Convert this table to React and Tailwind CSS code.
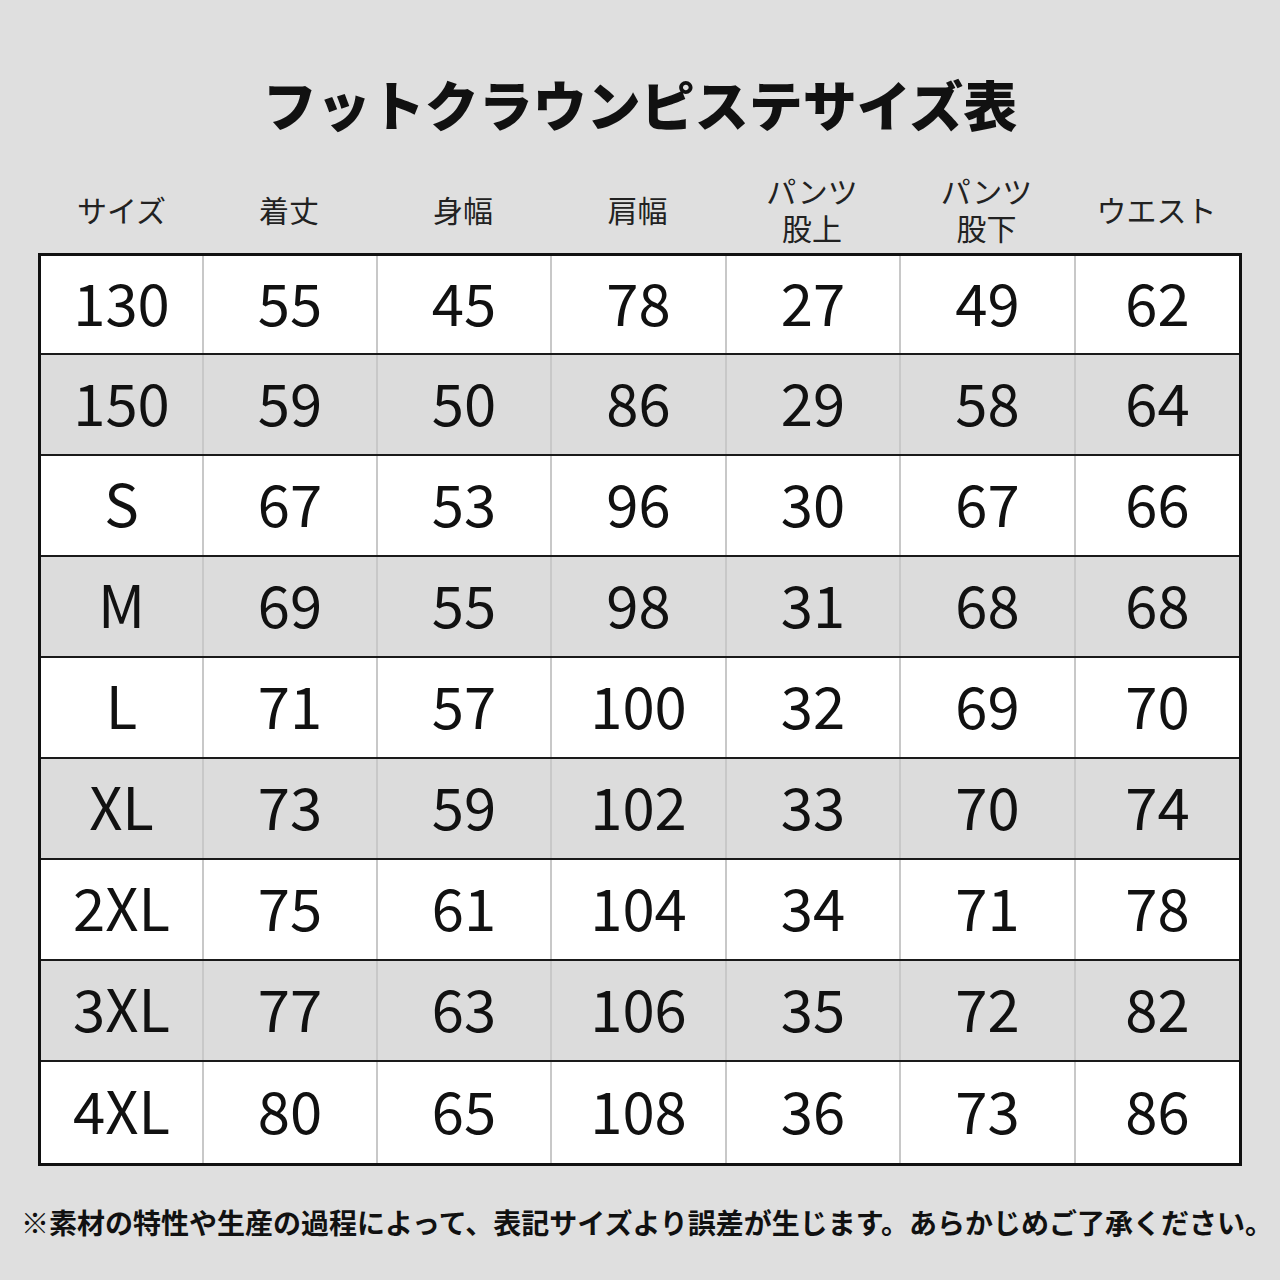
const columns = [
  { label: ["サイズ"] },
  { label: ["着丈"] },
  { label: ["身幅"] },
  { label: ["肩幅"] },
  { label: ["パンツ", "股上"] },
  { label: ["パンツ", "股下"] },
  { label: ["ウエスト"] },
];

const rows = [
  ["130", "55", "45", "78", "27", "49", "62"],
  ["150", "59", "50", "86", "29", "58", "64"],
  ["S", "67", "53", "96", "30", "67", "66"],
  ["M", "69", "55", "98", "31", "68", "68"],
  ["L", "71", "57", "100", "32", "69", "70"],
  ["XL", "73", "59", "102", "33", "70", "74"],
  ["2XL", "75", "61", "104", "34", "71", "78"],
  ["3XL", "77", "63", "106", "35", "72", "82"],
  ["4XL", "80", "65", "108", "36", "73", "86"],
];

const gridCols = "grid grid-cols-[161px_174px_174px_175px_174px_175px_165px]";

export default function App() {
  return (
    <div
      className="w-[1280px] h-[1280px] bg-[#dfdfdf] text-[#111] flex flex-col"
      style={{ fontFamily: '"Noto Sans CJK JP", "Noto Sans", sans-serif' }}
    >
      {/* Title */}
      <div className="h-[145px] pt-[70px] flex justify-center">
        <h1 className="text-[54px] leading-[70px] font-black -mt-[1px]">
          フットクラウンピステサイズ表
        </h1>
      </div>

      {/* Column headers */}
      <div className={`${gridCols} ml-[41px] w-[1198px] h-[108px] pt-[20px] items-center`}>
        {columns.map((c, i) => (
          <p
            key={i}
            className="text-center text-[30px] leading-[37px] text-[#222]"
          >
            {c.label[0]}
            {c.label[1] && (
              <>
                <br />
                {c.label[1]}
              </>
            )}
          </p>
        ))}
      </div>

      {/* Table */}
      <div className="ml-[38px] w-[1204px] border-[3px] border-[#111] divide-y-2 divide-[#1a1a1a]">
        {rows.map((r, ri) => (
          <div
            key={ri}
            className={`${gridCols} ${ri === 0 ? "h-[99px]" : "h-[101px]"} ${
              ri % 2 === 0 ? "bg-white" : "bg-[#dcdcdc]"
            }`}
          >
            {r.map((v, ci) => (
              <div
                key={ci}
                className={`flex items-center justify-center pb-[8px] text-[58px] leading-none font-normal ${
                  ci > 0 ? "border-l-2 border-[#c8c8c8]" : ""
                }`}
              >
                {v}
              </div>
            ))}
          </div>
        ))}
      </div>

      {/* Footer note */}
      <div className="flex-1 flex items-center justify-center pl-[14px] pb-[2px]">
        <p className="text-[28px] font-bold leading-none whitespace-nowrap">
          ※素材の特性や生産の過程によって、表記サイズより誤差が生じます。あらかじめご了承ください。
        </p>
      </div>
    </div>
  );
}
